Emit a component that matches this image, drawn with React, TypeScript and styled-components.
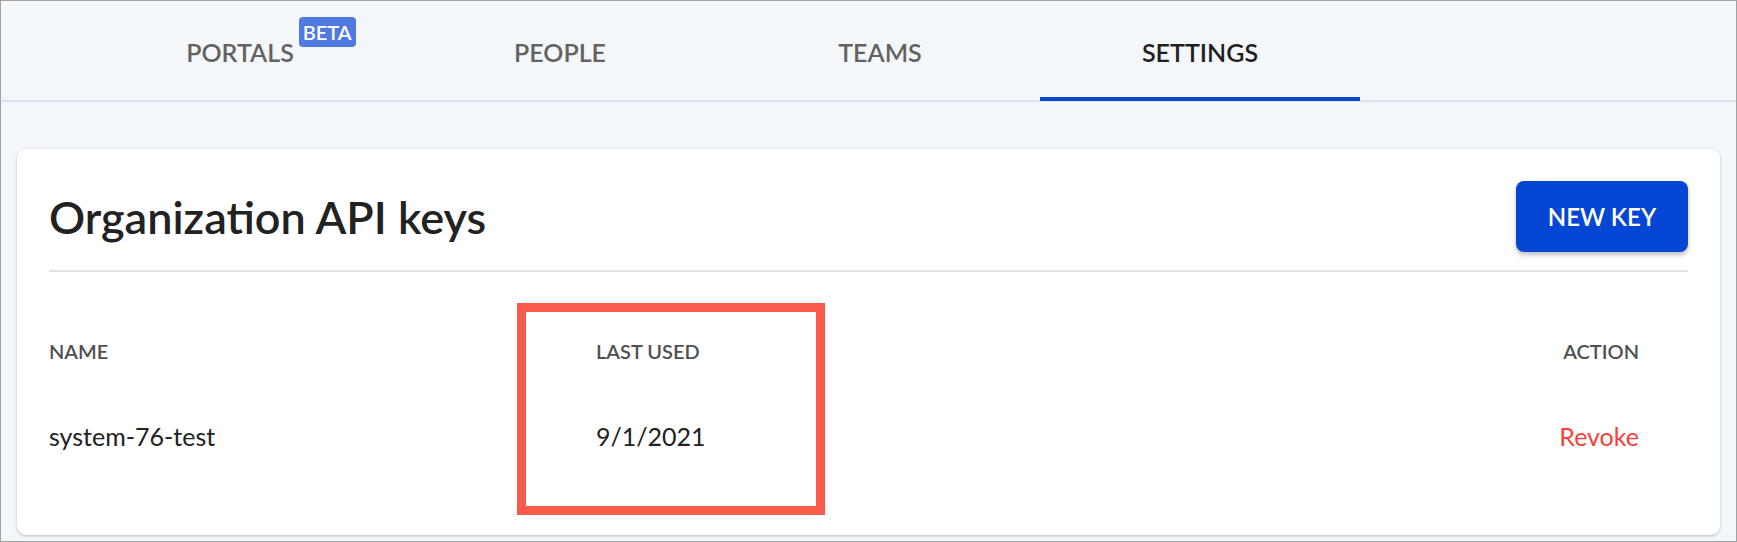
import styled, { createGlobalStyle } from "styled-components";

const GlobalStyle = createGlobalStyle`
    html, body {
        margin: 0;
        padding: 0;
        background: #ffffff;
    }
    * {
        box-sizing: border-box;
    }
`

const Page = styled.div`
    width: 1737px;
    height: 542px;
    border: 1px solid #a3a3a3;
    background: #f4f7f9;
    font-family: Lato, "Noto Sans", sans-serif;
    overflow: hidden;
`

const TabBar = styled.div`
    display: flex;
    height: 101px;
    padding-left: 79px;
    border-bottom: 2px solid #dce3ee;
`

const Tab = styled.div<{ $active?: boolean }>`
    width: 320px;
    display: flex;
    align-items: center;
    justify-content: center;
    padding-top: 6px;
    font-size: 25px;
    font-weight: 600;
    color: ${p => (p.$active ? "#1f1f1f" : "#626262")};
    border-bottom: 4px solid ${p => (p.$active ? "#0847d2" : "transparent")};
    margin-bottom: -1px;
`

const TabLabel = styled.span`
    position: relative;
`

const Badge = styled.span`
    position: absolute;
    left: calc(100% + 5px);
    top: -20px;
    height: 30px;
    padding: 0 4px;
    display: flex;
    align-items: center;
    border-radius: 4px;
    background: #5079e2;
    color: #ffffff;
    font-size: 20px;
    font-weight: 600;
`

const Content = styled.div`
    padding: 47px 16px 0;
`

const Card = styled.div`
    background: #ffffff;
    border-radius: 9px;
    padding: 32px;
    box-shadow: 0 1px 3px rgba(0, 0, 0, 0.25);
`

const CardHeader = styled.div`
    display: flex;
    align-items: center;
    justify-content: space-between;
    padding-bottom: 18px;
    border-bottom: 2px solid #e2e2e2;
`

const Title = styled.h1`
    margin: 0;
    font-size: 45px;
    font-weight: 600;
    color: #222222;
`

const PrimaryButton = styled.button`
    height: 71px;
    width: 172px;
    border: none;
    border-radius: 8px;
    background: #0646d4;
    color: #ffffff;
    font-family: inherit;
    font-size: 24px;
    font-weight: 600;
    box-shadow: 0 3px 5px rgba(0, 0, 0, 0.25);
`

const Table = styled.div`
    position: relative;
    display: grid;
    grid-template-columns: 547px 1fr auto;
    padding-right: 49px;
`

const HeadCell = styled.div<{ $right?: boolean }>`
    padding-top: 60px;
    line-height: 38px;
    font-size: 20px;
    font-weight: 600;
    color: #505050;
    text-align: ${p => (p.$right ? "right" : "left")};
`

const Cell = styled.div<{ $right?: boolean; $danger?: boolean }>`
    padding-top: 47px;
    padding-bottom: 48px;
    line-height: 38px;
    font-size: 25px;
    color: ${p => (p.$danger ? "#f4423a" : "#222222")};
    text-align: ${p => (p.$right ? "right" : "left")};
`

const Highlight = styled.div`
    position: absolute;
    left: 468px;
    top: 31px;
    width: 308px;
    height: 212px;
    border: 9px solid #fa5a4b;
    pointer-events: none;
`

const tabs = [
    { label: "PORTALS", beta: true },
    { label: "PEOPLE" },
    { label: "TEAMS" },
    { label: "SETTINGS", active: true },
]

export default function App() {
    return (
        <>
            <GlobalStyle />
            <Page>
                <TabBar>
                    {tabs.map(t => (
                        <Tab key={t.label} $active={t.active}>
                            <TabLabel>
                                {t.label}
                                {t.beta && <Badge>BETA</Badge>}
                            </TabLabel>
                        </Tab>
                    ))}
                </TabBar>
                <Content>
                    <Card>
                        <CardHeader>
                            <Title>Organization API keys</Title>
                            <PrimaryButton>NEW KEY</PrimaryButton>
                        </CardHeader>
                        <Table>
                            <HeadCell>NAME</HeadCell>
                            <HeadCell>LAST USED</HeadCell>
                            <HeadCell $right>ACTION</HeadCell>
                            <Cell>system-76-test</Cell>
                            <Cell>9/1/2021</Cell>
                            <Cell $right $danger>Revoke</Cell>
                            <Highlight />
                        </Table>
                    </Card>
                </Content>
            </Page>
        </>
    )
}
